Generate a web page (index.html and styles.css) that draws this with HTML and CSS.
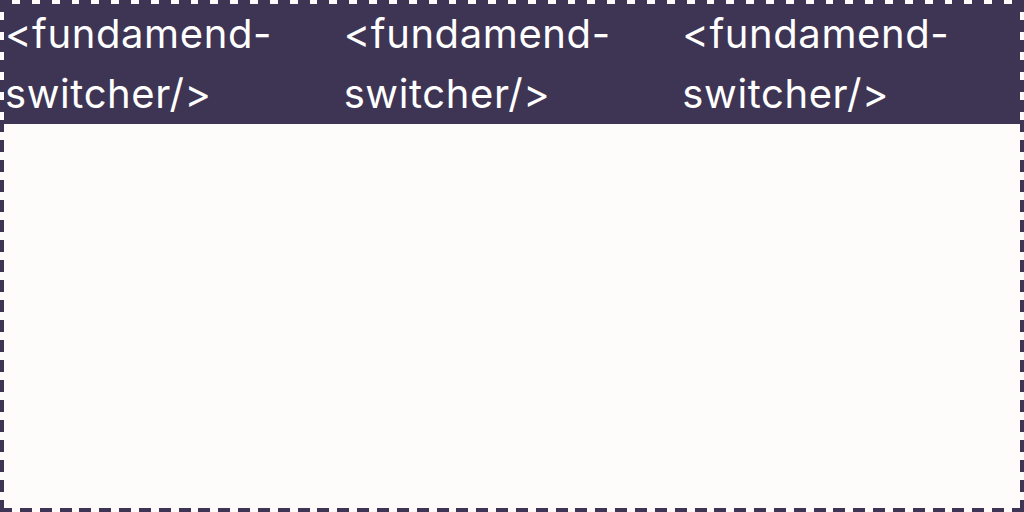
FILE: index.html
```html
<!DOCTYPE html>
<html>
<head>
<meta charset="utf-8">
<link rel="stylesheet" href="styles.css">
</head>
<body>
<div class="frame">
  <div class="header">
    <div class="cell">&lt;fundamend-switcher/&gt;</div>
    <div class="cell">&lt;fundamend-switcher/&gt;</div>
    <div class="cell">&lt;fundamend-switcher/&gt;</div>
  </div>
</div>
</body>
</html>
```
FILE: styles.css
```css
html, body {
  margin: 0;
  padding: 0;
}
body {
  width: 1024px;
  height: 512px;
  font-family: Inter, "Noto Sans", sans-serif;
}
.frame {
  box-sizing: border-box;
  width: 1024px;
  height: 512px;
  padding: 4px;
  background:
    repeating-linear-gradient(90deg, #3e3454 0 12px, transparent 12px 19.843px) left top / 100% 4px no-repeat,
    repeating-linear-gradient(90deg, #3e3454 0 12px, transparent 12px 19.843px) left bottom / 100% 4px no-repeat,
    repeating-linear-gradient(180deg, #3e3454 0 12px, transparent 12px 20px) left top / 4px 100% no-repeat,
    repeating-linear-gradient(180deg, #3e3454 0 12px, transparent 12px 20px) right top / 4px 100% no-repeat,
    #fdfcfa;
}
.header {
  display: grid;
  grid-template-columns: repeat(3, 1fr);
  background: #3e3454;
  color: #ffffff;
}
.cell {
  font-size: 40px;
  line-height: 60px;
  letter-spacing: 0.6px;
  padding-left: 1px;
}
```
